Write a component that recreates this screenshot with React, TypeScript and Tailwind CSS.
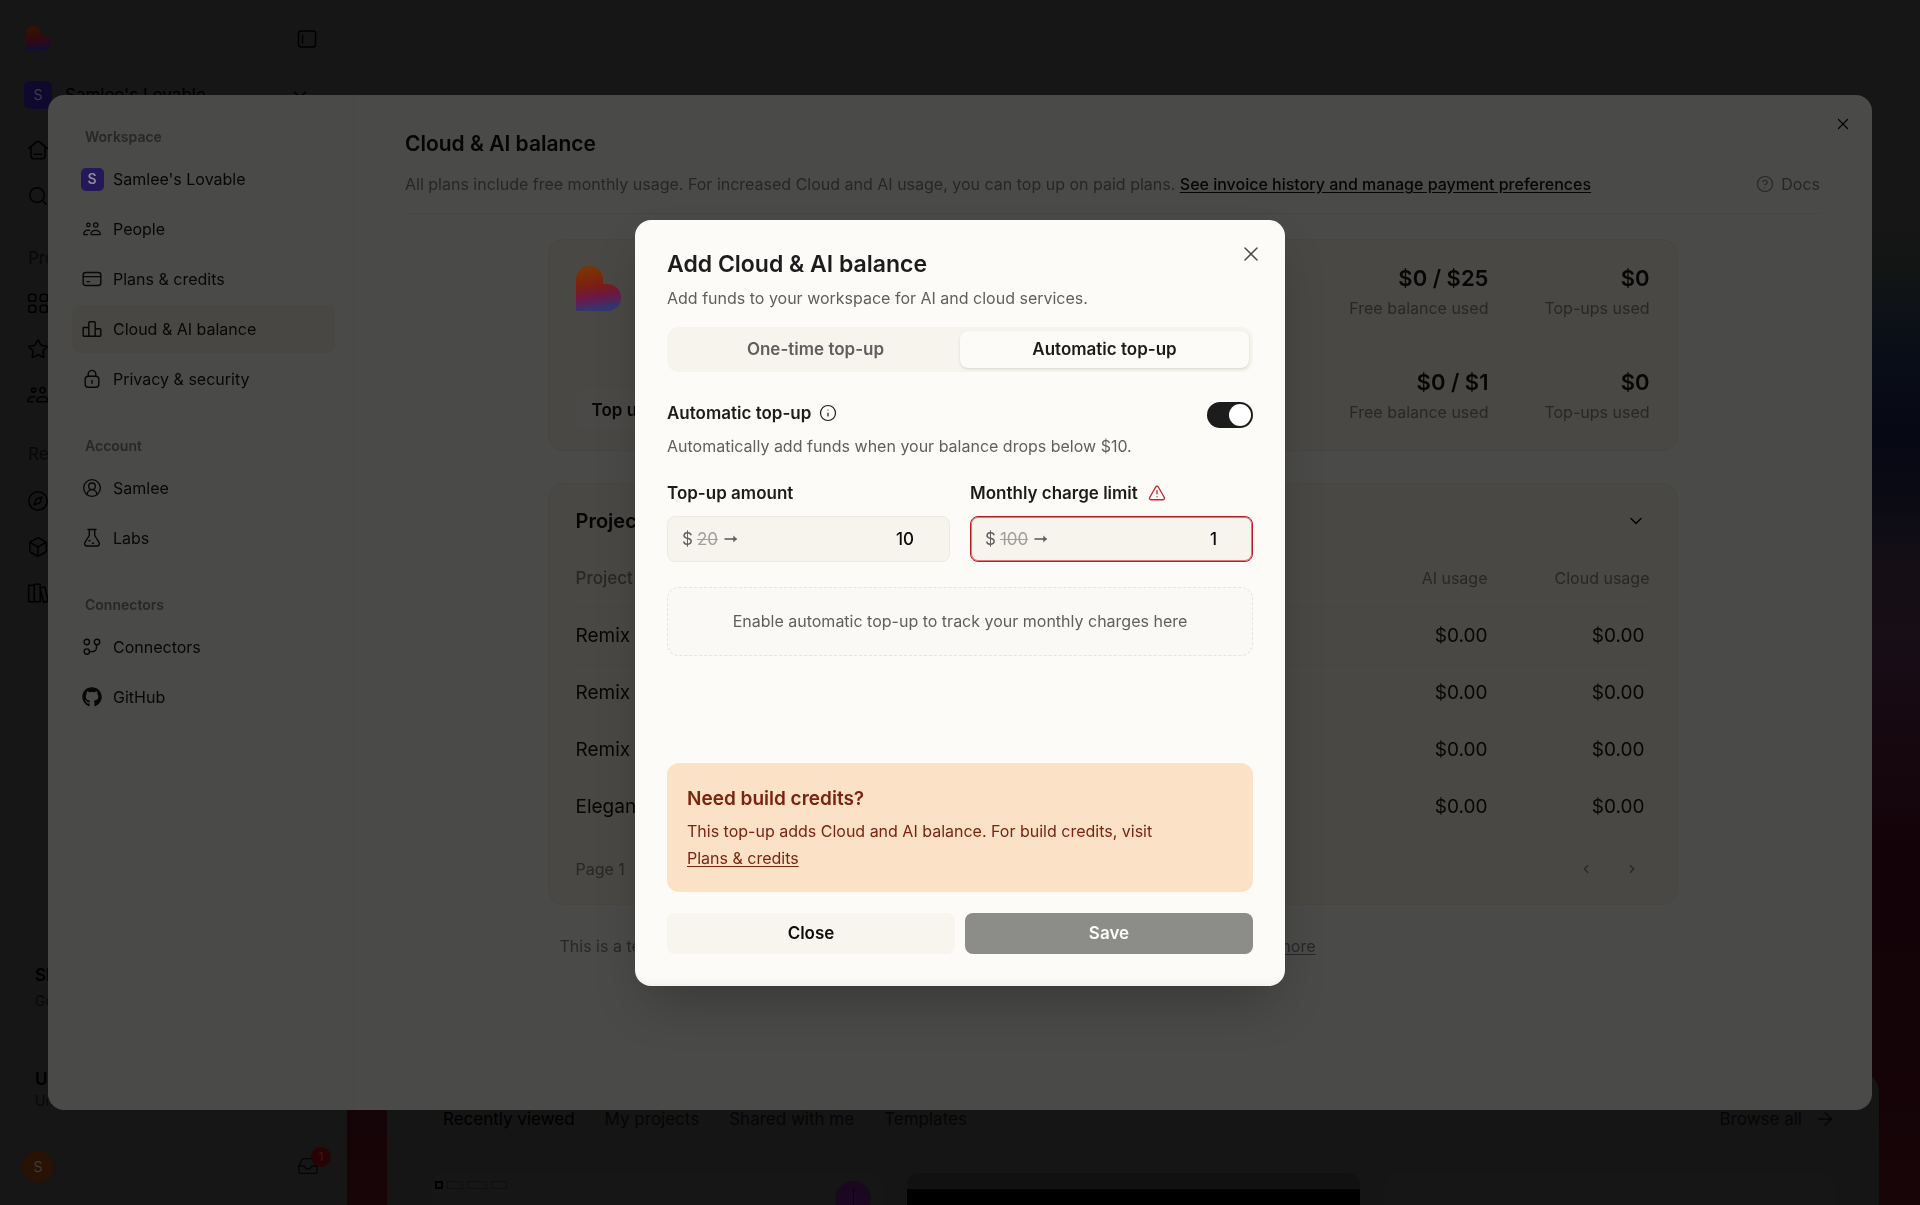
import { useState } from 'react';
import type { ReactNode } from 'react';
import { FaGithub } from 'react-icons/fa';
import {
  ArrowRight,
  Box,
  ChevronDown,
  ChevronLeft,
  ChevronRight,
  CircleHelp,
  CircleUserRound,
  Compass,
  Inbox,
  Info,
  Search,
  Star,
  TriangleAlert,
  X,
} from 'lucide-react';

function Svg({ size = 20, children }: { size?: number; children: ReactNode }) {
  return (
    <svg width={size} height={size} viewBox="0 0 20 20" fill="none" stroke="currentColor" strokeWidth="1.4" strokeLinecap="round" strokeLinejoin="round" aria-hidden="true">
      {children}
    </svg>
  );
}

const PeopleIcon = ({ size }: { size?: number }) => (
  <Svg size={size}>
    <circle cx="6" cy="5.500" r="1.900" />
    <circle cx="14.200" cy="5.500" r="2.400" />
    <path d="M9.500 16.200c-.6 0-.8-.5-.7-1 .5-2.300 2.600-3.700 5.200-3.700s4.700 1.400 5.200 3.700c.1.500-.1 1-.7 1z" />
    <path d="M7.400 11.500c-3.300-.6-6 .9-6.600 3.600-.1.600.1 1.100.7 1.100h3.600" />
  </Svg>
);

const CardIcon = () => (
  <Svg>
    <rect x="1.200" y="3.500" width="17.600" height="13" rx="2.500" />
    <path d="M1.200 7.600h17.600M5 12.600h2.500" />
  </Svg>
);

const BarsIcon = () => (
  <Svg>
    <path d="M1.200 8.500h5.600v8.700H2.200a1 1 0 0 1-1-1zM6.800 3.800a1 1 0 0 1 1-1h4.400a1 1 0 0 1 1 1v13.400H6.800zM13.200 9.800h4.600a1 1 0 0 1 1 1v5.400a1 1 0 0 1-1 1h-4.600z" />
  </Svg>
);

const LockIcon = () => (
  <Svg>
    <rect x="3.200" y="7.300" width="13.600" height="11" rx="3" />
    <path d="M6.200 7.300V5.200a3.800 3.800 0 0 1 7.600 0v2.100M10 11.500v2.700" />
  </Svg>
);

const FlaskIcon = () => (
  <Svg>
    <path d="M6 1.500h8M7.300 1.500v6L3 14.300c-1 1.800 0 3.700 2 3.700h10c2 0 3-1.900 2-3.700L12.700 7.500v-6M7 12.800h1M10.500 15.200h1" />
  </Svg>
);

const ConnectorIcon = () => (
  <Svg>
    <circle cx="4.800" cy="5" r="2.700" />
    <circle cx="4.800" cy="14.600" r="2.700" />
    <circle cx="15" cy="5" r="2.700" />
    <path d="M7.500 14.600h3a4 4 0 0 0 4-4V7.700" />
  </Svg>
);

const HomeIcon = () => (
  <Svg size={22}>
    <path d="M1.500 8.500 8.700 2.600a2 2 0 0 1 2.600 0l7.200 5.900M3.500 7v8a3 3 0 0 0 3 3h7a3 3 0 0 0 3-3V7M6.500 13.800h7" />
  </Svg>
);

const GridIcon = () => (
  <Svg size={22}>
    <rect x="1.500" y="2" width="6.500" height="6.500" rx="2.200" />
    <rect x="12" y="2" width="6.500" height="6.500" rx="2.200" />
    <rect x="1.500" y="12" width="6.500" height="6.500" rx="2.200" />
    <rect x="12" y="12" width="6.500" height="6.500" rx="2.200" />
  </Svg>
);

const BooksIcon = () => (
  <Svg size={22}>
    <path d="M1.500 3h5v15h-5zM6.500 2h5.500v16H6.500zM12 5.500l4.200-1 3 13-4.200 1z" />
  </Svg>
);

const SidebarIcon = () => (
  <Svg size={20}>
    <rect x="1.500" y="2" width="17" height="16" rx="2.500" />
    <path d="M5.500 6v8" />
  </Svg>
);

// Thick arrow between the old and the new amount
const ChangeArrow = () => (
  <svg width="14" height="14" viewBox="0 0 14 14" fill="none" stroke="currentColor" strokeWidth="1.600" className="ml-0.5" aria-hidden="true">
    <path d="M0.500 7h12" />
    <path d="M9.300 3.600 13 7l-3.700 3.400z" fill="currentColor" stroke="none" />
  </svg>
);

function Logo({ size, dim = false }: { size: number; dim?: boolean }) {
  const id = dim ? 'logo-dim' : 'logo';
  return (
    <svg width={size} height={size} viewBox="0 0 45 45" role="img" aria-label="Lovable">
      <defs>
        <linearGradient id={id} x1="0.4" y1="0" x2="0.55" y2="1">
          <stop offset="0.1" stopColor={dim ? '#351107' : '#7a3206'} />
          <stop offset="0.4" stopColor={dim ? '#340a0a' : '#7c200f'} />
          <stop offset="0.65" stopColor={dim ? '#2b081b' : '#701740'} />
          <stop offset="0.95" stopColor={dim ? '#130f30' : '#353573'} />
        </linearGradient>
      </defs>
      <path fill={`url(#${id})`} d="M0 13.500a13.500 13.500 0 0 1 27 0V18h4.500a13.500 13.500 0 0 1 0 27H0z" />
    </svg>
  );
}

const APP_NAV = [
  { label: 'Home', icon: <HomeIcon /> },
  { label: 'Search', icon: <Search size={22} strokeWidth={1.600} /> },
];

const APP_PROJECTS = [
  { label: 'All projects', icon: <GridIcon /> },
  { label: 'Starred', icon: <Star size={22} strokeWidth={1.600} /> },
  { label: 'Shared with me', icon: <PeopleIcon size={22} /> },
];

const APP_RESOURCES = [
  { label: 'Discover', icon: <Compass size={22} strokeWidth={1.600} /> },
  { label: 'Templates', icon: <Box size={22} strokeWidth={1.600} /> },
  { label: 'Learn', icon: <BooksIcon /> },
];

function AppNav({ items }: { items: { label: string; icon: ReactNode }[] }) {
  return (
    <ul>
      {items.map((item) => (
        <li key={item.label}>
          <a href="#" aria-label={item.label} className="flex h-[46px] items-center px-[27px] text-black">
            {item.icon}
          </a>
        </li>
      ))}
    </ul>
  );
}

function AppSidebar() {
  return (
    <aside className="flex w-[347px] shrink-0 flex-col">
      <div className="flex h-[77px] items-center justify-between pr-[30px] pl-[26px]">
        <Logo size={25} dim />
        <button type="button" aria-label="Toggle sidebar" className="text-black">
          <SidebarIcon />
        </button>
      </div>
      <button type="button" className="flex h-9 items-center gap-[13px] px-6 text-left text-black">
        <span className="flex size-7 items-center justify-center rounded-md bg-[#0f092d] text-sm text-[#3d3b4c]">S</span>
        <span className="flex-1 text-[17px]">Samlee's Lovable</span>
        <ChevronDown size={22} strokeWidth={1.500} className="mr-3" />
      </button>
      <div className="h-[14px]" />
      <AppNav items={APP_NAV} />
      <p className="flex h-[61px] items-end px-7 pb-[10px] text-[17px] text-[#080808]">Projects</p>
      <AppNav items={APP_PROJECTS} />
      <p className="flex h-[60px] items-end px-7 pb-3 text-[17px] text-[#080808]">Recent</p>
      <AppNav items={APP_RESOURCES} />
      <div className="mt-auto mb-9 px-[35px]">
        <p className="text-[17px] font-semibold text-black">Share</p>
        <p className="text-sm leading-7 text-[#080808]">Get 10 credits each</p>
      </div>
      <div className="mb-10 px-[35px] pt-4">
        <p className="text-[17px] font-semibold text-black">Upgrade to Pro</p>
        <p className="text-sm leading-5 text-[#080808]">Unlock more benefits</p>
      </div>
      <div className="flex h-[54px] items-start justify-between pr-7 pl-[22px]">
        <span className="flex size-8 items-center justify-center rounded-full bg-[#271205] text-sm text-[#413a34]">S</span>
        <button type="button" aria-label="Inbox" className="relative text-[#050505]">
          <Inbox size={22} strokeWidth={1.500} className="mt-1" />
          <span className="absolute -top-1 -right-3 flex size-5 items-center justify-center rounded-full bg-[#260406] text-xs text-[#421416]">1</span>
        </button>
      </div>
    </aside>
  );
}

function AppHome() {
  return (
    <main className="flex flex-1 flex-col justify-end bg-[linear-gradient(180deg,#161616_0%,#161616_18%,#131514_22%,#0a0e18_29%,#060813_36%,#0a0a14_41%,#140f14_47%,#180d16_54%,#16070e_62%,#130309_71%,#140307_85%,#170507_100%)] pr-[41px] pl-10">
      <section className="h-[133px] overflow-hidden rounded-t-[20px] bg-[#151515] pt-[35px] pr-[43px] pl-11 text-[#060606]">
        <div className="flex items-center gap-[30px] pl-3 text-[17px]">
          <button type="button" className="text-black">Recently viewed</button>
          <button type="button">My projects</button>
          <button type="button">Shared with me</button>
          <button type="button">Templates</button>
          <a href="#" className="ml-auto flex items-center gap-3">
            Browse all
            <ArrowRight size={22} strokeWidth={1.500} />
          </a>
        </div>
        <div className="mt-[42px] grid grid-cols-3 gap-6">
          <div className="flex h-10 justify-between rounded-t-xl bg-[#161616] pt-2 pr-3 pl-1">
            <div className="flex gap-1">
              <span className="size-2 border-2 border-black" />
              <span className="h-2 w-4 border border-[#0f0f0f]" />
              <span className="h-2 w-5 border border-[#0f0f0f]" />
              <span className="h-2 w-4 border border-[#0f0f0f]" />
            </div>
            <span className="flex size-9 justify-center rounded-full border-4 border-[#18091d] bg-[#1c0722] pt-1">
              <span className="h-5 w-px bg-[#0c030f]" />
            </span>
          </div>
          <div className="h-10 overflow-hidden rounded-t-xl bg-[#111111] pt-4">
            <div className="h-6 bg-black" />
          </div>
          <div className="h-10 rounded-t-xl bg-[#161616]" />
        </div>
      </section>
    </main>
  );
}

interface SettingsItem {
  label: string;
  icon: ReactNode;
  active?: boolean;
}

const SETTINGS_GROUPS: { title: string; items: SettingsItem[] }[] = [
  {
    title: 'Workspace',
    items: [
      {
        label: "Samlee's Lovable",
        icon: <span className="flex size-[23px] shrink-0 items-center justify-center rounded-[5px] bg-[#24175a] text-sm font-semibold text-[#8f8e98]">S</span>,
      },
      { label: 'People', icon: <PeopleIcon size={18} /> },
      { label: 'Plans & credits', icon: <CardIcon /> },
      { label: 'Cloud & AI balance', icon: <BarsIcon />, active: true },
      { label: 'Privacy & security', icon: <LockIcon /> },
    ],
  },
  {
    title: 'Account',
    items: [
      { label: 'Samlee', icon: <CircleUserRound size={20} strokeWidth={1.600} /> },
      { label: 'Labs', icon: <FlaskIcon /> },
    ],
  },
  {
    title: 'Connectors',
    items: [
      { label: 'Connectors', icon: <ConnectorIcon /> },
      { label: 'GitHub', icon: <FaGithub size={20} /> },
    ],
  },
];

function SettingsNav() {
  return (
    <nav className="flex w-[306px] shrink-0 flex-col gap-[33px] border-r border-[#474745] pt-8 pr-[18px] pl-6">
      {SETTINGS_GROUPS.map((group) => (
        <div key={group.title}>
          <h3 className="mb-2 px-[13px] text-sm leading-5 font-semibold text-[#272727]">{group.title}</h3>
          <ul className="flex flex-col gap-0.5">
            {group.items.map((item) => (
              <li key={item.label}>
                <a
                  href="#"
                  className={`flex h-12 items-center gap-[9px] rounded-lg px-2 text-[#070707] ${item.active ? 'bg-[#494744]' : ''}`}
                >
                  <span className="flex w-6 shrink-0 justify-center">{item.icon}</span>
                  <span>{item.label}</span>
                </a>
              </li>
            ))}
          </ul>
        </div>
      ))}
    </nav>
  );
}

function Metric({ value, label }: { value: string; label: string }) {
  return (
    <div className="text-right">
      <p className="text-[22px] leading-8 font-semibold text-[#060606]">{value}</p>
      <p className="leading-7 text-[#272726]">{label}</p>
    </div>
  );
}

const PROJECTS = [
  { id: 1, name: 'Remix', ai: '$0.00', cloud: '$0.00' },
  { id: 2, name: 'Remix', ai: '$0.00', cloud: '$0.00' },
  { id: 3, name: 'Remix', ai: '$0.00', cloud: '$0.00' },
  { id: 4, name: 'Elegant', ai: '$0.00', cloud: '$0.00' },
];

function BalanceSettings() {
  return (
    <div className="min-w-0 flex-1 pt-8 pr-[52px] pl-[51px]">
      <h2 className="text-[21px] leading-[34px] font-semibold text-[#050505]">Cloud & AI balance</h2>
      <div className="mt-2 flex items-center justify-between border-b border-[#454545] pb-[14px] leading-[30px] text-[#262626]">
        <p>
          All plans include free monthly usage. For increased Cloud and AI usage, you can top up on paid plans.{' '}
          <a href="#" className="font-medium text-[#050505] underline underline-offset-2">
            See invoice history and manage payment preferences
          </a>
        </p>
        <a href="#" className="flex items-center gap-[7px]">
          <CircleHelp size={18} strokeWidth={1.600} />
          Docs
        </a>
      </div>

      <div className="mx-auto mt-[25px] max-w-[1130px]">
        <section className="flex h-[212px] justify-between rounded-2xl border border-[#464644] bg-[#494845] px-[27px] pt-[22px] pb-5">
          <div className="flex flex-col items-start justify-between pt-1">
            <Logo size={45} />
            <button type="button" className="h-10 rounded-lg bg-[#4a4947] px-4 text-[17px] font-semibold text-[#060606]">
              Top up
            </button>
          </div>
          <div className="grid grid-cols-[1fr_auto] content-between gap-x-14 pb-1">
            <Metric value="$0 / $25" label="Free balance used" />
            <Metric value="$0" label="Top-ups used" />
            <Metric value="$0 / $1" label="Free balance used" />
            <Metric value="$0" label="Top-ups used" />
          </div>
        </section>

        <section className="mt-8 rounded-2xl border border-[#464644] bg-[#494845] px-[27px] pt-[17px] pb-0.5">
          <button type="button" className="flex h-10 w-full items-center justify-between text-left text-xl font-semibold text-[#050505]">
            Project usage
            <ChevronDown size={20} strokeWidth={1.800} className="mr-1" />
          </button>
          <table className="mt-2 w-full text-[#060606]">
            <thead>
              <tr className="h-[58px] border-b border-[#464644] text-[#272726]">
                <th className="text-left text-[17px] font-medium">Project</th>
                <th className="w-40 text-right font-normal">AI usage</th>
                <th className="w-[162px] text-right font-normal">Cloud usage</th>
              </tr>
            </thead>
            <tbody className="text-[19px]">
              {PROJECTS.map((project) => (
                <tr key={project.id} className="h-[57px] border-b border-[#464644]">
                  <td>{project.name}</td>
                  <td className="text-right">{project.ai}</td>
                  <td className="pr-[5px] text-right">{project.cloud}</td>
                </tr>
              ))}
            </tbody>
          </table>
          <div className="flex h-[66px] items-center text-[#272726]">
            <span className="flex-1">Page 1</span>
            <button type="button" aria-label="Previous page" className="p-4">
              <ChevronLeft size={14} />
            </button>
            <button type="button" aria-label="Next page" className="p-4 pr-[11px]">
              <ChevronRight size={14} />
            </button>
          </div>
        </section>

        <div className="mt-[23px] flex max-w-[768px] justify-between pl-3 leading-9 text-[#272727]">
          <p>This is a temporary offering.</p>
          <a href="#" className="underline underline-offset-2">Learn more</a>
        </div>
      </div>
    </div>
  );
}

function SettingsDialog() {
  return (
    <div className="fixed inset-0 flex items-center justify-center">
      <div className="relative flex h-[calc(100vh-190px)] w-[calc(100vw-96px)] overflow-hidden rounded-2xl bg-[#4a4a49]">
        <SettingsNav />
        <BalanceSettings />
        <button type="button" aria-label="Close settings" className="absolute top-5 right-5 text-[#050505]">
          <X size={18} strokeWidth={1.600} />
        </button>
      </div>
    </div>
  );
}

interface AmountFieldProps {
  id: string;
  label: string;
  previous: string;
  value: string;
  invalid?: boolean;
  onChange: (value: string) => void;
}

function AmountField({ id, label, previous, value, invalid, onChange }: AmountFieldProps) {
  return (
    <div>
      <label htmlFor={id} className="flex h-7 items-center gap-[10px] text-[17px] font-semibold">
        {label}
        {invalid && <TriangleAlert size={18} strokeWidth={1.800} className="text-[#c8252c]" />}
      </label>
      <div
        className={`mt-[9px] flex h-[46px] items-center rounded-lg border bg-[#f7f4ed] pr-[35px] pl-[14px] text-[17px] ${
          invalid ? 'border-[#b91c22] ring-1 ring-[#c8252c]/60 ring-inset' : 'border-[#eceae4]'
        }`}
      >
        <span className="flex items-center gap-1 text-[#5f5f5d]">
          $ <s className="text-[#a09f9a]">{previous}</s>
          <ChangeArrow />
        </span>
        <input
          id={id}
          inputMode="numeric"
          value={value}
          aria-invalid={invalid}
          onChange={(e) => onChange(e.target.value)}
          className="min-w-0 flex-1 bg-transparent text-right font-medium text-[#0c0c0c] outline-none"
        />
      </div>
    </div>
  );
}

function TopUpDialog() {
  const [tab, setTab] = useState<'once' | 'auto'>('auto');
  const [enabled, setEnabled] = useState(true);
  const [amount, setAmount] = useState('10');
  const [limit, setLimit] = useState('1');

  const tabClass = (active: boolean) =>
    `rounded-lg text-[17px] font-semibold ${active ? 'bg-[#fcfbf8] text-[#1c1c1c] shadow' : 'text-[#5f5f5d]'}`;

  return (
    <div className="fixed inset-0 flex items-center justify-center">
      <div
        role="dialog"
        aria-labelledby="topup-title"
        className="relative w-[650px] rounded-2xl bg-[#fcfbf8] px-8 pt-7 pb-8 text-[#1c1c1c] shadow-[inset_0_-8px_8px_-6px_rgba(0,0,0,0.05),0_25px_50px_-12px_rgba(0,0,0,0.25)]"
      >
        <button type="button" aria-label="Close dialog" className="absolute top-[22px] right-[22px] text-[#4b4b4a]">
          <X size={24} strokeWidth={1.500} />
        </button>
        <h2 id="topup-title" className="text-[23px] leading-8 font-semibold">Add Cloud & AI balance</h2>
        <p className="mt-1 leading-7 text-[#5f5f5d]">Add funds to your workspace for AI and cloud services.</p>

        <div role="tablist" className="mt-[15px] grid h-[45px] grid-cols-2 rounded-xl bg-[#f7f4ed] p-1">
          <button type="button" role="tab" aria-selected={tab === 'once'} onClick={() => setTab('once')} className={tabClass(tab === 'once')}>
            One-time top-up
          </button>
          <button type="button" role="tab" aria-selected={tab === 'auto'} onClick={() => setTab('auto')} className={tabClass(tab === 'auto')}>
            Automatic top-up
          </button>
        </div>

        <div className="mt-[27px] flex justify-between">
          <div>
            <label htmlFor="auto-topup" className="flex h-7 items-center gap-2 text-[17px] font-semibold">
              Automatic top-up
              <Info size={18} strokeWidth={1.600} />
            </label>
            <p className="mt-1 leading-[30px] text-[#5f5f5d]">Automatically add funds when your balance drops below $10.</p>
          </div>
          <input
            id="auto-topup"
            type="checkbox"
            role="switch"
            checked={enabled}
            onChange={(e) => setEnabled(e.target.checked)}
            className="mt-[3px] h-[26px] w-[46px] shrink-0 appearance-none rounded-full bg-[#c9c7c1] p-0.5 before:block before:size-[22px] before:rounded-full before:bg-white checked:bg-[#1c1c1c] checked:before:ml-auto"
          />
        </div>

        <div className="mt-[18px] grid grid-cols-2 gap-5">
          <AmountField id="topup-amount" label="Top-up amount" previous="20" value={amount} onChange={setAmount} />
          <AmountField id="charge-limit" label="Monthly charge limit" previous="100" value={limit} onChange={setLimit} invalid />
        </div>

        <div className="mt-[25px] flex h-[69px] items-center justify-center rounded-xl border border-dashed border-[#e6e4de] bg-[#faf9f5] text-[#5f5f5d]">
          Enable automatic top-up to track your monthly charges here
        </div>

        <div className="mt-[107px] rounded-xl bg-[#fbe2c7] px-5 pt-[22px] pb-5 text-[#7a2410]">
          <h3 className="text-[19px] leading-7 font-semibold">Need build credits?</h3>
          <p className="mt-[5px] leading-[27px]">
            This top-up adds Cloud and AI balance. For build credits, visit
            <br />
            <a href="#" className="underline underline-offset-2">
              Plans & credits
            </a>
          </p>
        </div>

        <div className="mt-[21px] grid grid-cols-2 gap-[10px] text-[17px] font-semibold">
          <button type="button" className="h-[41px] rounded-lg bg-[#f7f5ee] text-[#0c0c0c]">
            Close
          </button>
          <button type="button" disabled className="h-[41px] rounded-lg bg-[#8c8c89] text-[#fcfbf8]">
            Save
          </button>
        </div>
      </div>
    </div>
  );
}

export default function App() {
  return (
    <div className="flex h-screen overflow-hidden bg-[#161616] font-[Inter,sans-serif] text-base leading-6">
      <AppSidebar />
      <AppHome />
      <SettingsDialog />
      <TopUpDialog />
    </div>
  );
}
